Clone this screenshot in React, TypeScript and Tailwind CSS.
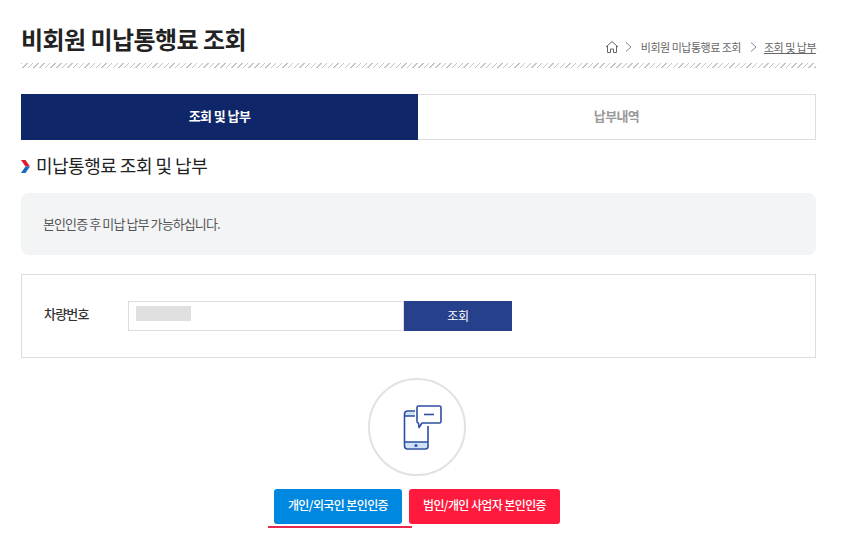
export default function App() {
  return (
    <div className="w-[847px] h-[533px] overflow-hidden bg-white px-[21px] pr-[31px] font-['Noto_Sans_CJK_KR','Noto_Sans',sans-serif] text-[#222]">
      {/* Page header */}
      <div className="flex items-end justify-between h-[63px] pb-[8px]">
        <h1 className="text-[24px] leading-[36px] font-bold tracking-[-0.55px] text-[#222] mb-[-2px]">비회원 미납통행료 조회</h1>
        <div className="flex items-center text-[11px] leading-[16px] tracking-[-0.5px] text-[#666]">
          <svg width="14" height="14" viewBox="0 0 14 14" fill="none" stroke="#666" strokeWidth="1" className="mr-[5px]">
            <path d="M1 7 7 1.500 13 7" />
            <path d="M2.500 5.500v7h3V9h3v3.500h3v-7" />
          </svg>
          <Chevron />
          <span className="mx-[8px]">비회원 미납통행료 조회</span>
          <Chevron />
          <span className="ml-[6px] underline">조회 및 납부</span>
        </div>
      </div>
      <div className="h-[5px] bg-[repeating-linear-gradient(135deg,#c4c4c4_0,#c4c4c4_1px,#fff_1px,#fff_4px)]" />

      {/* Tabs */}
      <div className="flex mt-[26px] h-[46px] text-[13px] font-bold tracking-[-0.6px]">
        <div className="flex-1 flex items-center justify-center pb-[2px] bg-[#0f2768] text-white">조회 및 납부</div>
        <div className="flex-1 flex items-center justify-center pb-[2px] border border-l-0 border-[#ddd] text-[#999]">납부내역</div>
      </div>

      {/* Section heading */}
      <div className="flex items-center mt-[12px] h-[26px]">
        <svg width="9" height="13" viewBox="0 0 9 13" className="mr-[6px] mt-[2px]">
          <path d="M0 0h4.500L9 6.500H4.500z" fill="#e0192f" />
          <path d="M0 13h4.500L9 6.500H4.500z" fill="#1769c2" />
        </svg>
        <h2 className="text-[18px] leading-[26px] font-normal tracking-[-0.5px]">미납통행료 조회 및 납부</h2>
      </div>

      {/* Notice */}
      <div className="flex items-center mt-[15px] h-[62px] rounded-[8px] bg-[#f3f4f6] px-[22px] text-[13px] tracking-[-0.9px] text-[#555]">
        본인인증 후 미납 납부 가능하십니다.
      </div>

      {/* Search form */}
      <div className="flex items-center mt-[19px] h-[84px] border border-[#ddd] pl-[22px]">
        <span className="w-[84px] mb-[4px] text-[13px] font-medium tracking-[-0.8px] text-[#333]">차량번호</span>
        <div className="flex items-center w-[276px] h-[30px] border border-[#ddd] pl-[7px]">
          <div className="w-[55px] h-[15px] mb-[6px] bg-[#e0e0e0]" />
        </div>
        <button className="w-[108px] h-[30px] bg-[#27408b] text-[12px] tracking-[-0.4px] text-white">조회</button>
      </div>

      {/* Phone verification */}
      <div className="flex justify-center mt-[20px] ml-[-4px]">
        <div className="flex items-center justify-center w-[98px] h-[98px] pl-[12px] pt-[2px] rounded-full border-2 border-[#e2e2e2]">
          <svg width="40" height="46" viewBox="0 0 40 46" fill="none" stroke="#2f4ea3" strokeWidth="1.6" strokeLinejoin="round">
            <path d="M2 6.500h10v4.500H2z" fill="#cfe3f7" stroke="none" />
            <path d="M2 37h22v6H2z" fill="#cfe3f7" stroke="none" />
            <path d="M12 6H4.500A3 3 0 0 0 1.500 9v32a3 3 0 0 0 3 3h18a2.500 2.500 0 0 0 2.500-2.500V21" />
            <path d="M1.500 11H12M1.500 37h23.500" />
            <path d="M14 2.500a1.500 1.500 0 0 1 1.500-1.500h21a1.500 1.500 0 0 1 1.500 1.500v14a1.500 1.500 0 0 1-1.500 1.500H19l-3 4.500-.5-4.500a1.500 1.500 0 0 1-1.500-1.500z" fill="#fff" />
            <path d="M21 9.500h10" />
            <circle cx="13" cy="40.500" r="0.800" fill="#2f4ea3" />
          </svg>
        </div>
      </div>

      {/* Auth buttons */}
      <div className="flex justify-center gap-[7px] mt-[13px] ml-[-3px] text-[12px] font-medium tracking-[-0.6px] text-white">
        <div className="relative">
          <button className="w-[128px] h-[35px] pb-[3px] rounded-[3px] bg-[#0088e0]">개인/외국인 본인인증</button>
          <div className="absolute left-[-6px] top-[37px] w-[144px] h-[2px] bg-[#e8284f]" />
        </div>
        <button className="w-[151px] h-[35px] pb-[3px] rounded-[3px] bg-[#ff1a3d]">법인/개인 사업자 본인인증</button>
      </div>
    </div>
  );
}

function Chevron() {
  return (
    <svg width="7" height="10" viewBox="0 0 7 10" fill="none" stroke="#888" strokeWidth="1" className="mx-[1px]">
      <path d="M1 0.500 6 5 1 9.500" />
    </svg>
  );
}
